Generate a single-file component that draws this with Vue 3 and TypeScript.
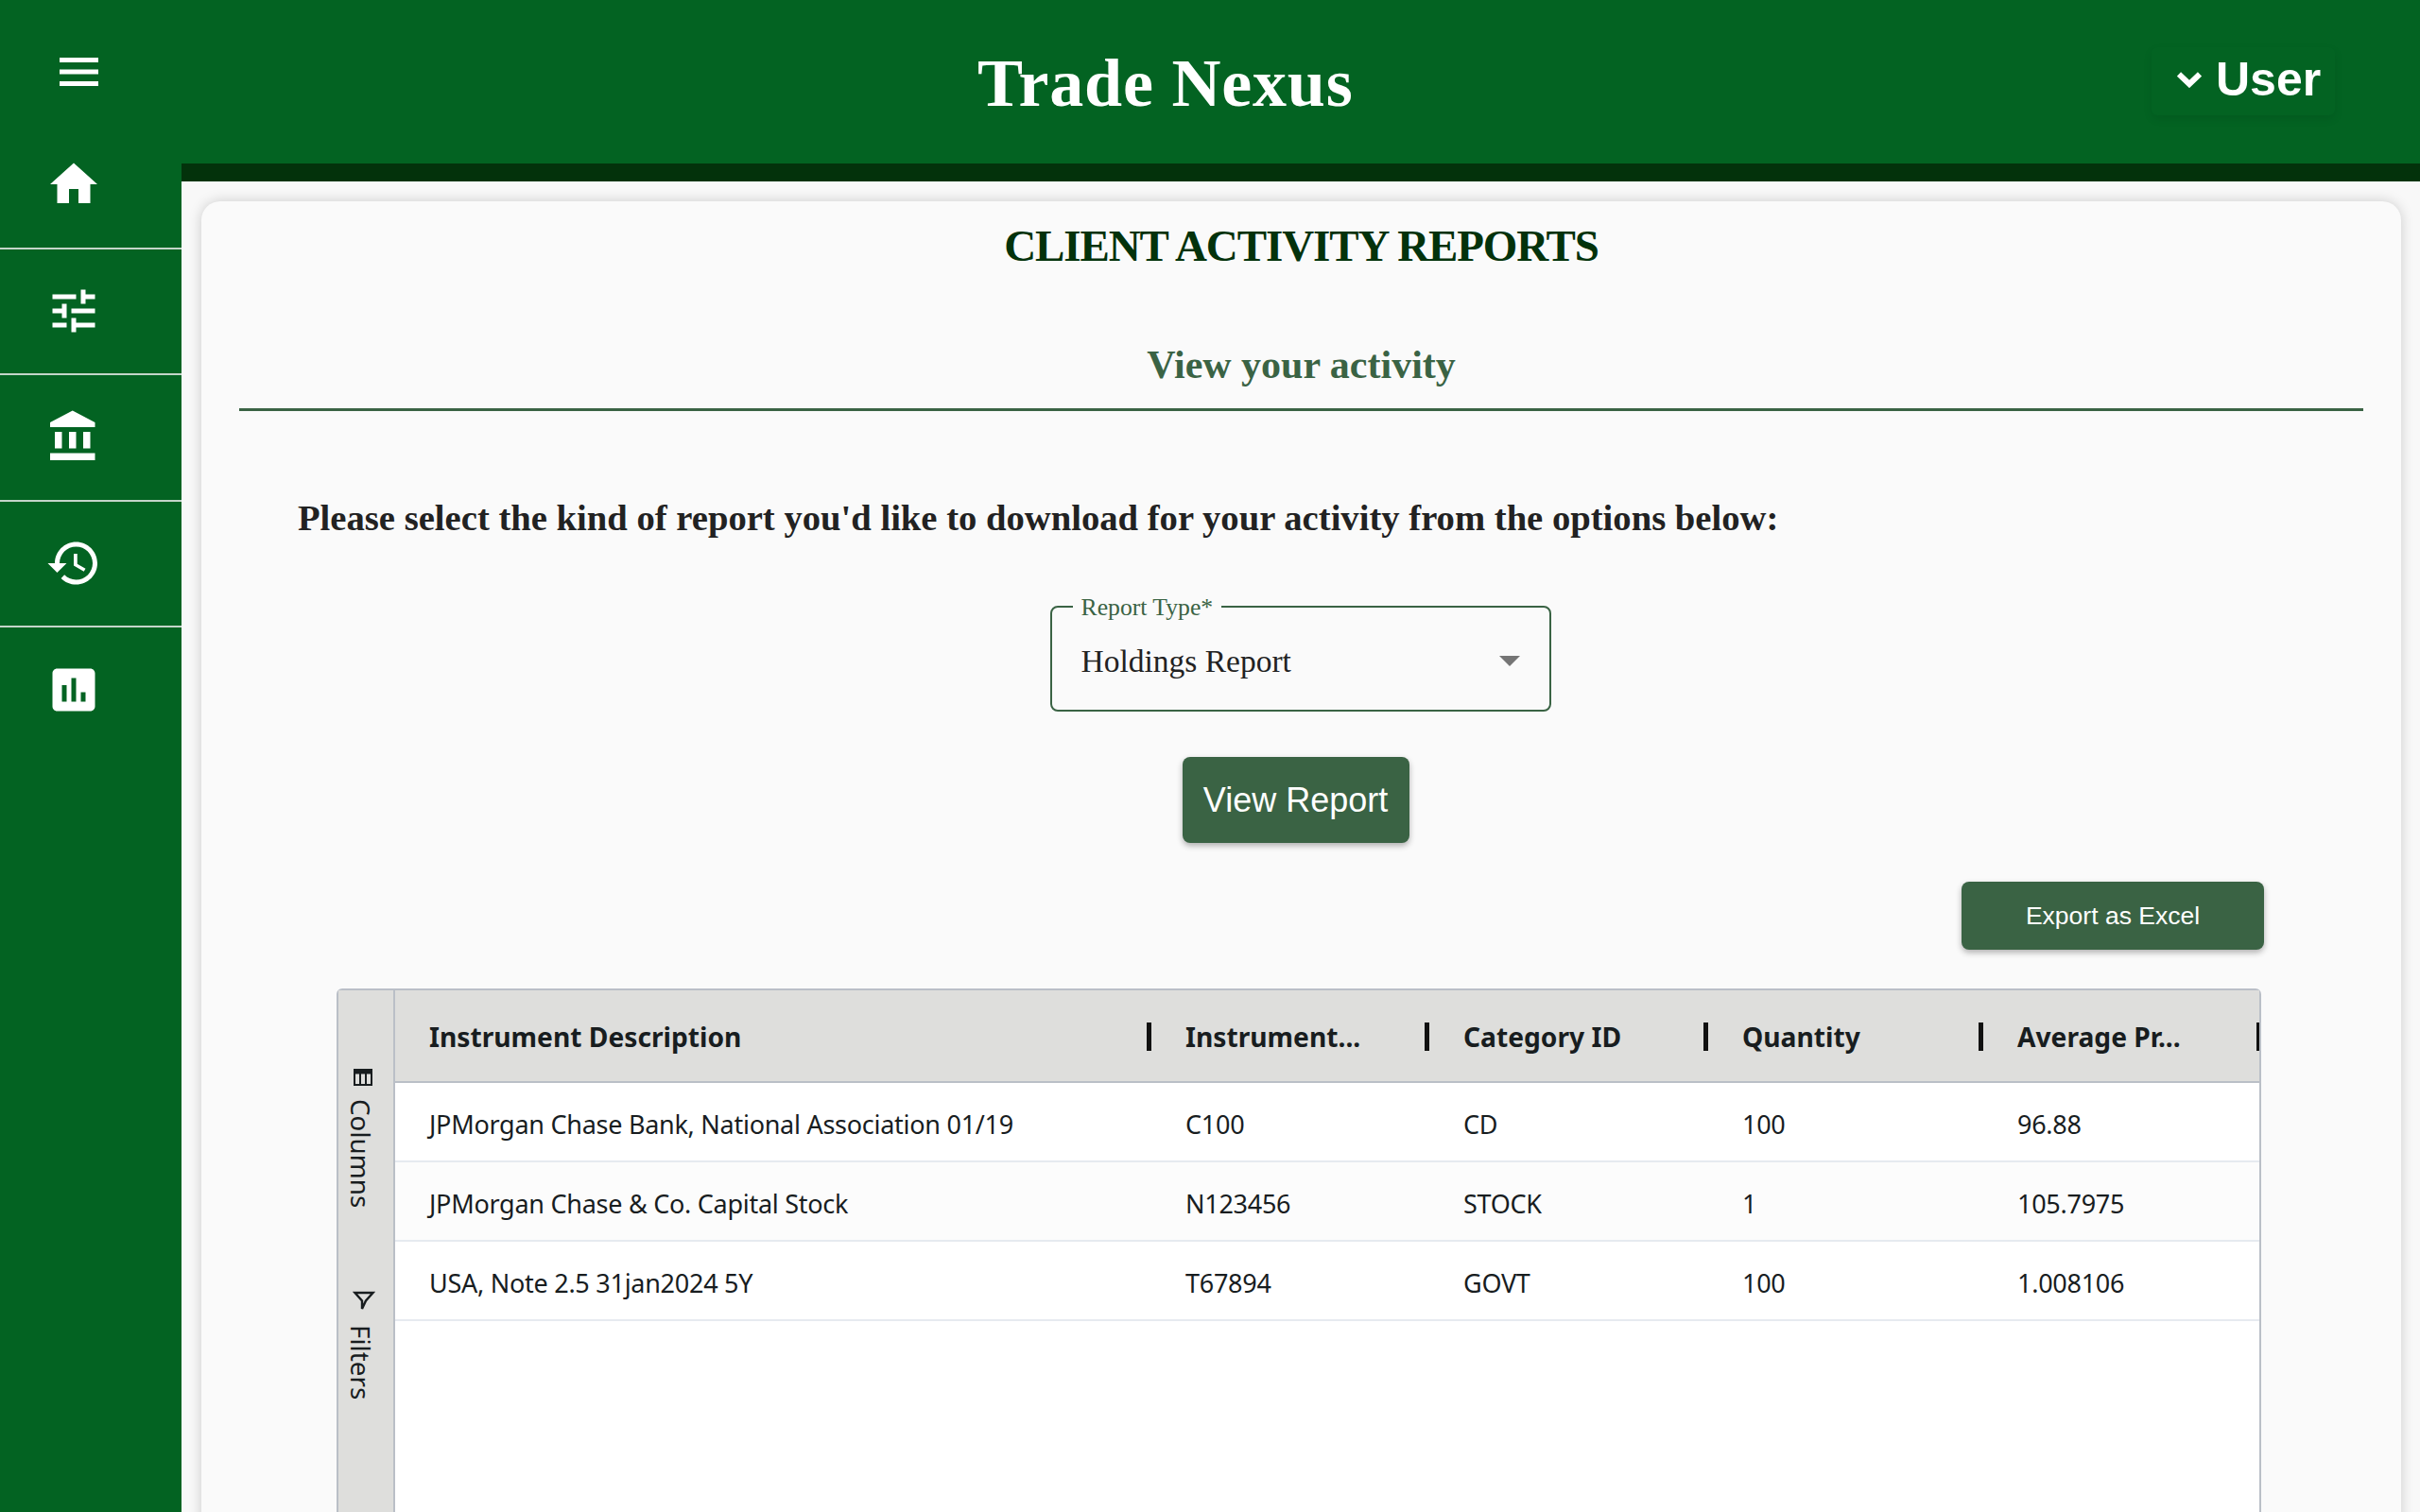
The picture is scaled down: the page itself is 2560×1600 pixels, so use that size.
<script setup lang="ts">
interface Row {
  description: string
  instrument: string
  category: string
  quantity: string
  price: string
}

const navIcons: string[] = [
  'M10 20v-6h4v6h5v-8h3L12 3 2 12h3v8z',
  'M3 17v2h6v-2H3zM3 5v2h10V5H3zm10 16v-2h8v-2h-8v-2h-2v6h2zM7 9v2H3v2h4v2h2V9H7zm14 4v-2H11v2h10zm-6-4h2V7h4V5h-4V3h-2v6z',
  'M4 10v7h3v-7H4zm6 0v7h3v-7h-3zM2 22h19v-3H2v3zm14-12v7h3v-7h-3zm-4.5-9L2 6v2h19V6l-9.5-5z',
  'M13 3c-4.97 0-9 4.03-9 9H1l3.89 3.89.07.14L9 12H6c0-3.87 3.13-7 7-7s7 3.13 7 7-3.13 7-7 7c-1.93 0-3.68-.79-4.94-2.06l-1.42 1.42C8.27 19.99 10.51 21 13 21c4.97 0 9-4.03 9-9s-4.03-9-9-9zm-1 5v5l4.28 2.54.72-1.21-3.5-2.08V8H12z',
  'M19 3H5c-1.1 0-2 .9-2 2v14c0 1.1.9 2 2 2h14c1.1 0 2-.9 2-2V5c0-1.1-.9-2-2-2zM9 17H7v-7h2v7zm4 0h-2V7h2v10zm4 0h-2v-4h2v4z',
]

const columns: string[] = ['Instrument Description', 'Instrument...', 'Category ID', 'Quantity', 'Average Pr...']

const rows: Row[] = [
  { description: 'JPMorgan Chase Bank, National Association 01/19', instrument: 'C100', category: 'CD', quantity: '100', price: '96.88' },
  { description: 'JPMorgan Chase & Co. Capital Stock', instrument: 'N123456', category: 'STOCK', quantity: '1', price: '105.7975' },
  { description: 'USA, Note 2.5 31jan2024 5Y', instrument: 'T67894', category: 'GOVT', quantity: '100', price: '1.008106' },
]
</script>

<template>
  <div class="app">
    <aside class="sidebar">
      <div class="menu-block">
        <svg class="menu-icon" viewBox="0 0 41 30" fill="#fff">
          <rect width="41" height="5" />
          <rect y="12.5" width="41" height="5" />
          <rect y="25" width="41" height="5" />
        </svg>
      </div>
      <div v-for="(d, i) in navIcons" :key="i" class="nav-item">
        <svg viewBox="0 0 24 24" fill="#fff"><path :d="d" /></svg>
      </div>
    </aside>

    <div class="main">
      <header class="topbar">
        <h1 class="brand">Trade Nexus</h1>
        <div class="user">
          <svg viewBox="0 0 26 18" fill="none" stroke="#fff" stroke-width="6"><path d="M2 3.500l11 10.500L24 3.500" /></svg>
          <span>User</span>
        </div>
      </header>
      <div class="topbar-strip"></div>

      <div class="content">
        <section class="card">
          <h2 class="page-title">CLIENT ACTIVITY REPORTS</h2>
          <h3 class="page-sub">View your activity</h3>
          <div class="divider"></div>
          <p class="prompt">Please select the kind of report you'd like to download for your activity from the options below:</p>

          <div class="select">
            <label class="select-label">Report Type*</label>
            <span class="select-value">Holdings Report</span>
            <i class="select-arrow"></i>
          </div>

          <button class="view-btn">View Report</button>

          <div class="export-row">
            <button class="export-btn">Export as Excel</button>
          </div>

          <div class="grid">
            <div class="tool-panel">
              <div class="tool tool-columns">
                <svg viewBox="0 0 20 18" fill="none" stroke="#181d1f" stroke-width="2">
                  <rect x="1" y="1" width="18" height="16" />
                  <rect x="1" y="1" width="18" height="3.500" fill="#181d1f" />
                  <path d="M7 4v13M13 4v13" />
                </svg>
                <span>Columns</span>
              </div>
              <div class="tool tool-filters">
                <svg viewBox="0 0 24 22" fill="none" stroke="#181d1f" stroke-width="2.400">
                  <path d="M2.500 2h19l-7.500 8.500-4 8.500v-8.500z" />
                </svg>
                <span>Filters</span>
              </div>
            </div>
            <div class="table">
              <div class="table-row table-head">
                <div v-for="c in columns" :key="c" class="head-cell">
                  <span>{{ c }}</span>
                  <i class="handle"></i>
                </div>
              </div>
              <div v-for="r in rows" :key="r.instrument" class="table-row body-row">
                <div class="cell">{{ r.description }}</div>
                <div class="cell">{{ r.instrument }}</div>
                <div class="cell">{{ r.category }}</div>
                <div class="cell">{{ r.quantity }}</div>
                <div class="cell">{{ r.price }}</div>
              </div>
            </div>
          </div>
        </section>
      </div>
    </div>
  </div>
</template>

<style>
html, body {
  margin: 0;
  height: 100%;
  overflow: hidden;
}
</style>

<style scoped>
.app {
  display: flex;
  width: 2560px;
  height: 1600px;
  overflow: hidden;
  background: #f8f8f8;
  font-family: "Liberation Serif", serif;
}

.sidebar {
  width: 192px;
  flex-shrink: 0;
  background: #036322;
  display: flex;
  flex-direction: column;
}

.menu-block {
  height: 130px;
  box-sizing: border-box;
  padding: 61px 0 0 63px;
}

.menu-icon {
  display: block;
  width: 41px;
  height: 30px;
}

.nav-item {
  height: 133.500px;
  box-sizing: border-box;
  display: flex;
  align-items: center;
  padding: 0 0 1px 48px;
  border-bottom: 2px solid #c4d5c9;
}

.nav-item:last-child {
  border-bottom: none;
}

.nav-item svg {
  width: 60px;
  height: 60px;
}

.main {
  flex: 1;
  min-width: 0;
  display: flex;
  flex-direction: column;
}

.topbar {
  height: 173px;
  flex-shrink: 0;
  background: #036322;
  display: flex;
  align-items: flex-start;
}

.brand {
  margin: 48px 0 0 842px;
  font-size: 72px;
  line-height: 80px;
  font-weight: 700;
  letter-spacing: 0.8px;
  color: #fff;
  white-space: nowrap;
}

.user {
  margin: 50px 90px 0 auto;
  width: 194px;
  height: 72px;
  box-sizing: border-box;
  padding: 0 0 5px 27px;
  display: flex;
  align-items: center;
  gap: 15px;
  background: #036322;
  border-radius: 6px;
  box-shadow: 0 4px 10px rgba(0, 0, 0, 0.09);
  font-family: "Liberation Sans", sans-serif;
  font-size: 50px;
  font-weight: 700;
  color: #fff;
}

.user svg {
  width: 26px;
  height: 18px;
}

.topbar-strip {
  height: 19px;
  flex-shrink: 0;
  background: #03320b;
}

.content {
  flex: 1;
  min-height: 0;
  padding: 21px 20px 0 21px;
}

.card {
  height: 1500px;
  box-sizing: border-box;
  background: #fafafa;
  border-radius: 20px;
  box-shadow: 0 0 14px rgba(0, 0, 0, 0.18);
  padding: 16px 40px 0;
  display: flex;
  flex-direction: column;
  align-items: center;
}

.page-title {
  margin: 0;
  font-size: 47px;
  line-height: 62px;
  font-weight: 700;
  letter-spacing: -1.1px;
  color: #03320b;
  white-space: nowrap;
}

.page-sub {
  margin: 71px 0 0;
  font-size: 42px;
  line-height: 48px;
  font-weight: 700;
  color: #3a6344;
  white-space: nowrap;
}

.divider {
  align-self: stretch;
  height: 3px;
  margin-top: 22px;
  background: #3a6344;
}

.prompt {
  align-self: flex-start;
  margin: 90px 0 0 62px;
  font-size: 38.650px;
  line-height: 46px;
  font-weight: 700;
  color: #222;
  white-space: nowrap;
}

.select {
  position: relative;
  margin: 70px 2px 0 0;
  width: 530px;
  height: 112px;
  box-sizing: border-box;
  padding: 5px 0 0 31px;
  display: flex;
  align-items: center;
  border: 2px solid #3a6344;
  border-radius: 8px;
}

.select-label {
  position: absolute;
  left: 22px;
  top: -14px;
  padding: 0 9px;
  background: #fafafa;
  font-size: 25.700px;
  line-height: 28px;
  color: #3a6344;
}

.select-value {
  font-size: 33.500px;
  color: #222;
}

.select-arrow {
  position: absolute;
  right: 31px;
  top: 51px;
  width: 0;
  height: 0;
  border-left: 11px solid transparent;
  border-right: 11px solid transparent;
  border-top: 11px solid #757575;
}

.view-btn {
  margin: 48px 12px 0 0;
  width: 240px;
  height: 91px;
  border: none;
  border-radius: 8px;
  background: #3a6344;
  box-shadow: 0 3px 6px rgba(0, 0, 0, 0.3);
  font-family: "Liberation Sans", sans-serif;
  font-size: 36px;
  color: #fff;
}

.export-row {
  align-self: stretch;
  display: flex;
  justify-content: flex-end;
  margin-top: 41px;
  padding-right: 105px;
}

.export-btn {
  width: 320px;
  height: 72px;
  border: none;
  border-radius: 8px;
  background: #3a6344;
  box-shadow: 0 3px 6px rgba(0, 0, 0, 0.3);
  font-family: "Liberation Sans", sans-serif;
  font-size: 26.500px;
  color: #fff;
}

.grid {
  align-self: flex-start;
  margin: 41px 0 0 103px;
  width: 2036px;
  height: 600px;
  box-sizing: border-box;
  display: flex;
  border: 2px solid #babfc7;
  border-radius: 6px 6px 0 0;
  background: #fff;
  font-family: "Noto Sans", sans-serif;
  color: #181d1f;
}

.tool-panel {
  width: 58px;
  flex-shrink: 0;
  background: #dededc;
  border-right: 2px solid #babfc7;
  position: relative;
}

.tool {
  position: absolute;
  left: 9px;
  display: flex;
  flex-direction: column;
  align-items: center;
  gap: 14px;
}

.tool svg {
  flex-shrink: 0;
  margin-left: 4px;
}

.tool-columns svg {
  width: 20px;
  height: 18px;
}

.tool-filters svg {
  width: 24px;
  height: 22px;
  margin-left: 6px;
}

.tool span {
  writing-mode: vertical-rl;
  font-size: 27.800px;
  line-height: 30px;
}

.tool-columns {
  top: 83px;
}

.tool-filters {
  top: 318px;
}

.table {
  flex: 1;
  min-width: 0;
  overflow: hidden;
}

.table-row {
  display: grid;
  grid-template-columns: 800px 294px 295px 291px 294px;
}

.table-head {
  height: 98px;
  background: #dededc;
  border-bottom: 2px solid #babfc7;
  box-sizing: border-box;
  font-size: 28.200px;
  font-weight: 700;
}

.head-cell {
  position: relative;
  display: flex;
  align-items: center;
  padding: 2px 0 0 36px;
}

.handle {
  position: absolute;
  right: 0;
  top: 34px;
  width: 5px;
  height: 30px;
  background: #111;
}

.body-row {
  height: 84px;
  box-sizing: border-box;
  border-bottom: 2px solid #e6eaf0;
  background: #fff;
}

.body-row:nth-child(odd) {
  background: #fcfcfc;
}

.cell {
  display: flex;
  align-items: center;
  padding: 5px 0 0 36px;
  font-size: 27px;
  letter-spacing: -0.27px;
  white-space: nowrap;
}
</style>
